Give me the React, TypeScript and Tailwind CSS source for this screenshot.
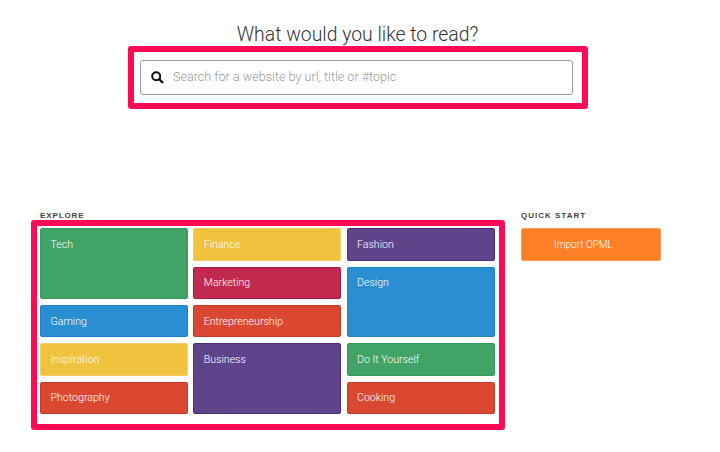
import React from "react";

const tiles: [string, string][] = [
  ["Tech", "bg-[#41a367] border-[#329a5a] col-start-1 row-start-1 row-span-2"],
  ["Finance", "bg-[#f1c23e] border-[#f3cd60] col-start-2 row-start-1"],
  ["Fashion", "bg-[#5f448b] border-[#482f78] col-start-3 row-start-1"],
  ["Marketing", "bg-[#c2294f] border-[#a81a40] col-start-2 row-start-2"],
  ["Design", "bg-[#298fd2] border-[#1d82c6] col-start-3 row-start-2 row-span-2"],
  ["Gaming", "bg-[#298fd2] border-[#1d82c6] col-start-1 row-start-3"],
  ["Entrepreneurship", "bg-[#da4832] border-[#c43a24] col-start-2 row-start-3"],
  ["Inspiration", "bg-[#f1c23e] border-[#f3cd60] col-start-1 row-start-4"],
  ["Business", "bg-[#5f448b] border-[#482f78] col-start-2 row-start-4 row-span-2"],
  ["Do It Yourself", "bg-[#41a367] border-[#329a5a] col-start-3 row-start-4"],
  ["Photography", "bg-[#da4832] border-[#c43a24] col-start-1 row-start-5"],
  ["Cooking", "bg-[#da4832] border-[#c43a24] col-start-3 row-start-5"],
];

export default function App() {
  return (
    <div className="w-[720px] h-[452px] bg-white overflow-hidden font-['Liberation_Sans',sans-serif]">
      <div className="flex flex-col items-center">
        <h1 className="mt-[23px] h-[23px] text-[19.4px] leading-[24px] font-light text-[#333] ml-[-5px] font-['Roboto',sans-serif]">What would you like to read?</h1>
        <div className="ml-[-4px] w-[460px] h-[63px] border-[6px] border-[#ff0a54] rounded-[3px] pt-[8px] pl-[6px]">
          <div className="w-[433px] h-[35px] border border-[#999999] rounded-[3px] flex items-center pl-[10px]">
            <svg width="13" height="13" viewBox="0 0 13 13" fill="none" stroke="#111" strokeWidth="2">
              <circle cx="5.2" cy="5.2" r="4" />
              <path d="M8.2 8.2L12 12" strokeWidth="2.4" />
            </svg>
            <span className="ml-[9px] text-[12.6px] font-light text-[#9a9a9a] font-['Roboto',sans-serif]">Search for a website by url, title or #topic</span>
          </div>
        </div>
      </div>
      <div className="flex mt-[99px] pl-[31px]">
        <div className="w-[474px]">
          <div className="pl-[9px] h-[12px] text-[8px] leading-[16px] font-bold tracking-[0.9px] text-[#444]">EXPLORE</div>
          <div className="border-[6px] border-[#ff0a54] rounded-[3px] h-[210px] pt-[2.3px] pl-[3px]">
            <div className="grid grid-cols-[148px_148px_148px] grid-rows-[repeat(5,32.4px)] gap-x-[5.25px] gap-y-[6px]">
              {tiles.map(([label, cls]) => (
                <div key={label} className={`${cls} border rounded-[2px] pl-[9.5px] pt-[8.5px] text-[10.6px] leading-[13px] text-white font-[350] font-['Roboto',sans-serif]`}>
                  {label}
                </div>
              ))}
            </div>
          </div>
        </div>
        <div className="ml-[16px] w-[140px]">
          <div className="h-[12px] text-[8px] leading-[16px] font-bold tracking-[1px] text-[#444]">QUICK START</div>
          <div className="mt-[8.3px] h-[32.4px] bg-[#ff7f27] border border-[#ff9a55] rounded-[2px] flex items-center pl-[32px] text-[10px] text-white font-[350] font-['Roboto',sans-serif]">
            Import OPML
          </div>
        </div>
      </div>
    </div>
  );
}
